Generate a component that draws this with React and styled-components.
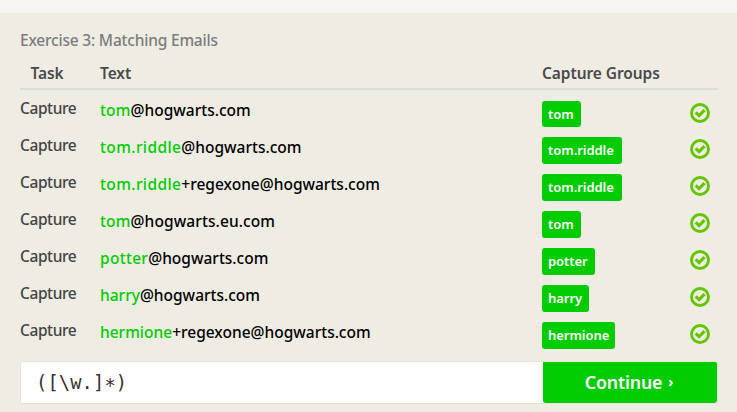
import React from "react";
import styled, { createGlobalStyle } from "styled-components";

const GlobalStyle = createGlobalStyle`
  * { box-sizing: border-box; }
  body {
    margin: 0;
    background: #efece3;
    font-family: "Noto Sans", "Open Sans", sans-serif;
    overflow: hidden;
  }
`;

const Page = styled.main`
  height: 412px;
  border-top: 13px solid #f6f5f0;
  padding: 16px 19px 0 20px;
  white-space: nowrap;
`;

const Title = styled.h2`
  margin: 0;
  height: 31px;
  line-height: 22px;
  font-size: 15.5px;
  font-weight: 500;
  color: #7c7c7c;
  letter-spacing: -0.2px;
`;

const columns = "80px 442px 148px 1fr";

const HeaderRow = styled.div`
  display: grid;
  grid-template-columns: ${columns};
  height: 30px;
  border-bottom: 2px solid #dcdcdc;
  line-height: 27px;
  font-size: 15.5px;
  font-weight: 600;
  color: #4a4a4a;
`;

const HeaderCell = styled.div`
  padding-left: ${(p) => p.$indent || 0}px;
  letter-spacing: -0.08px;
`;

const Rows = styled.div`
  padding-top: 5px;
`;

const Row = styled.div`
  display: grid;
  grid-template-columns: ${columns};
  align-items: start;
  height: 37px;
`;

const Task = styled.div`
  line-height: 27px;
  font-size: 15.5px;
  font-weight: 500;
  color: #444;
  letter-spacing: -0.4px;
`;

const Email = styled.div`
  line-height: 31px;
  font-size: 15.5px;
  font-weight: 500;
  color: #000;
  letter-spacing: ${(p) => p.$spacing || 0}px;
`;

const Match = styled.span`
  color: #00cc00;
  letter-spacing: ${(p) => p.$spacing || 0}px;
`;

const Badge = styled.span`
  display: block;
  width: ${(p) => p.$width}px;
  height: ${(p) => (p.$first ? 26 : 27)}px;
  margin-top: ${(p) => (p.$first ? 6 : 5)}px;
  padding-left: 6px;
  border-radius: 3px;
  background: #00cc00;
  color: #fff;
  font-size: 13px;
  font-weight: 600;
  line-height: 26px;
  letter-spacing: -0.05px;
`;

const CheckIcon = styled.svg`
  display: block;
  width: 20px;
  height: 20px;
  margin-top: ${(p) => (p.$first ? 8 : 7)}px;
`;

const AnswerBar = styled.div`
  display: flex;
  width: 698px;
  height: 43px;
  margin-top: 7px;
  border: 1px solid #e5e3d4;
  border-radius: 3px;
  overflow: hidden;
`;

const Pattern = styled.div`
  width: 522px;
  padding-left: 15px;
  background: #fff;
  color: #333;
  font-family: "DejaVu Sans Mono", monospace;
  font-size: 18.7px;
  line-height: 42px;
  letter-spacing: 0.15px;
`;

const Star = styled.span`
  vertical-align: -3px;
  line-height: 1;
`;

const ContinueButton = styled.button`
  display: flex;
  align-items: center;
  justify-content: center;
  gap: 6px;
  flex: 1;
  padding: 0 2px 2px 0;
  border: 0;
  border-radius: 0 0 3px 3px;
  background: #00cc00;
  color: #fff;
  font-family: inherit;
  font-size: 17.8px;
  font-weight: 600;
  letter-spacing: -0.2px;
`;

const Chevron = styled.span`
  font-size: 14px;
  font-weight: 700;
`;

const Check = ({ first }) => (
  <CheckIcon viewBox="0 0 20 20" $first={first}>
    <circle cx="10" cy="10" r="8.5" fill="none" stroke="#66c400" strokeWidth="2.9" />
    <path d="M5.7 9.3 L9.1 12.6 L14.5 7.2" fill="none" stroke="#66c400" strokeWidth="3.1" />
  </CheckIcon>
);

const rows = [
  { match: "tom", rest: "@hogwarts.com", width: 39, spacing: 0.15 },
  { match: "tom.riddle", rest: "@hogwarts.com", width: 80, spacing: 0.4 },
  { match: "tom.riddle", rest: "+regexone@hogwarts.com", width: 80, spacing: 0.4 },
  { match: "tom", rest: "@hogwarts.eu.com", width: 39, spacing: 0.15, restSpacing: 0.1 },
  { match: "potter", rest: "@hogwarts.com", width: 53, spacing: 0.3 },
  { match: "harry", rest: "@hogwarts.com", width: 47 },
  { match: "hermione", rest: "+regexone@hogwarts.com", width: 73 },
];

export default function App() {
  return (
    <>
      <GlobalStyle />
      <Page>
        <Title>Exercise 3: Matching Emails</Title>
        <HeaderRow>
          <HeaderCell $indent={10.5}>Task</HeaderCell>
          <HeaderCell>Text</HeaderCell>
          <HeaderCell>Capture Groups</HeaderCell>
        </HeaderRow>
        <Rows>
          {rows.map((r, i) => (
            <Row key={i}>
              <Task>Capture</Task>
              <Email $spacing={r.restSpacing}>
                <Match $spacing={r.spacing}>{r.match}</Match>
                {r.rest}
              </Email>
              <Badge $width={r.width} $first={i === 0}>{r.match}</Badge>
              <Check first={i === 0} />
            </Row>
          ))}
        </Rows>
        <AnswerBar>
          <Pattern>{"([\\w.]"}<Star>*</Star>)</Pattern>
          <ContinueButton>
            Continue <Chevron>›</Chevron>
          </ContinueButton>
        </AnswerBar>
      </Page>
    </>
  );
}
